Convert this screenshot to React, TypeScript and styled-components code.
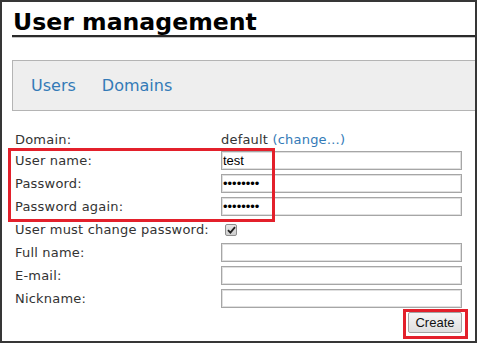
import React from "react";
import styled, { createGlobalStyle } from "styled-components";

const GlobalStyle = createGlobalStyle`
  html, body { margin: 0; padding: 0; background: #ffffff; }
  body { font-family: "DejaVu Sans", Verdana, sans-serif; color: #333333; }
`;

const Frame = styled.div`
  position: relative;
  box-sizing: border-box;
  width: 477px;
  height: 343px;
  border: 2px solid #363636;
  padding: 8px 0 0 10px;
  background: #ffffff;
  overflow: hidden;
`;

const Title = styled.h1`
  margin: 0;
  padding-left: 1px;
  font-family: "DejaVu Sans", Verdana, sans-serif;
  font-size: 23.6px;
  font-weight: bold;
  line-height: 25px;
  color: #000000;
  border-bottom: 2px solid #2a2a2a;
  box-shadow: 0 1px 0 #c4c4c4;
`;

const Nav = styled.nav`
  margin-top: 23px;
  display: flex;
  gap: 26px;
  padding: 15px 0 15px 18px;
  background: #eeeeee;
  border: 1px solid #b4b4b4;
  border-right: none;
`;

const NavLink = styled.a`
  font-size: 16px;
  line-height: 19px;
  color: #337ab7;
  text-decoration: none;
  cursor: pointer;
`;

const Form = styled.form`
  margin: 21px 0 0 3px;
  display: flex;
  flex-direction: column;
  gap: 4px;
`;

const Row = styled.div<{ $compact?: boolean }>`
  display: grid;
  grid-template-columns: 206px 241px;
  align-items: center;
  min-height: ${(p) => (p.$compact ? "15px" : "19px")};
  font-size: 13px;
  line-height: ${(p) => (p.$compact ? "15px" : "19px")};
`;

const Label = styled.label`
  color: #333333;
  white-space: nowrap;
  letter-spacing: 0.2px;
`;

const Value = styled.span`
  color: #333333;
  white-space: nowrap;
  letter-spacing: 0.2px;
`;

const Change = styled.a`
  color: #337ab7;
  text-decoration: none;
`;

const TextInput = styled.input`
  box-sizing: border-box;
  width: 241px;
  height: 19px;
  margin: 0;
  padding: 0 1px;
  border: 1px solid #a6a6a6;
  box-shadow: inset 0 0 0 1px #e0e0e0;
  border-radius: 0;
  background: #ffffff;
  font-family: "Liberation Sans", Arial, sans-serif;
  font-size: 13px;
  color: #000000;
  outline: none;
`;

const CheckBox = styled.span`
  box-sizing: border-box;
  display: inline-flex;
  align-items: center;
  justify-content: center;
  width: 12px;
  height: 12px;
  margin-left: 4px;
  border: 1px solid #8e8e8e;
  border-radius: 2px;
  background: linear-gradient(#e6e6e6, #cfcfcf);
`;

const ButtonRow = styled.div`
  display: flex;
  justify-content: flex-end;
  width: 447px;
`;

const Button = styled.button`
  box-sizing: border-box;
  width: 54px;
  height: 21px;
  margin: 0;
  padding: 0;
  border: 1px solid #a3a3a3;
  border-radius: 2px;
  background: linear-gradient(#f6f6f6, #dedede);
  font-family: "Liberation Sans", Arial, sans-serif;
  font-size: 13px;
  color: #111111;
`;

const Highlight = styled.div<{ $left: number; $top: number; $w: number; $h: number }>`
  position: absolute;
  box-sizing: border-box;
  left: ${(p) => p.$left}px;
  top: ${(p) => p.$top}px;
  width: ${(p) => p.$w}px;
  height: ${(p) => p.$h}px;
  border: 3px solid #e3202b;
  pointer-events: none;
`;

export default function App() {
  return (
    <>
      <GlobalStyle />
      <Frame>
        <Title>User management</Title>
        <Nav>
          <NavLink>Users</NavLink>
          <NavLink>Domains</NavLink>
        </Nav>
        <Form onSubmit={(e) => e.preventDefault()}>
          <Row $compact>
            <Label>Domain:</Label>
            <Value>
              default <Change>(change…)</Change>
            </Value>
          </Row>
          <Row>
            <Label>User name:</Label>
            <TextInput type="text" defaultValue="test" />
          </Row>
          <Row>
            <Label>Password:</Label>
            <TextInput type="password" defaultValue="12345678" />
          </Row>
          <Row>
            <Label>Password again:</Label>
            <TextInput type="password" defaultValue="12345678" />
          </Row>
          <Row>
            <Label>User must change password:</Label>
            <span>
              <CheckBox>
                <svg width="9" height="8" viewBox="0 0 9 8">
                  <path d="M1 4.2 L3.4 6.6 L8 1.2" fill="none" stroke="#222" strokeWidth="1.8" />
                </svg>
              </CheckBox>
            </span>
          </Row>
          <Row>
            <Label>Full name:</Label>
            <TextInput type="text" />
          </Row>
          <Row>
            <Label>E-mail:</Label>
            <TextInput type="text" />
          </Row>
          <Row>
            <Label>Nickname:</Label>
            <TextInput type="text" />
          </Row>
          <ButtonRow>
            <Button type="submit">Create</Button>
          </ButtonRow>
        </Form>
        <Highlight $left={6} $top={146} $w={267} $h={74} />
        <Highlight $left={401} $top={307} $w={65} $h={30} />
      </Frame>
    </>
  );
}
